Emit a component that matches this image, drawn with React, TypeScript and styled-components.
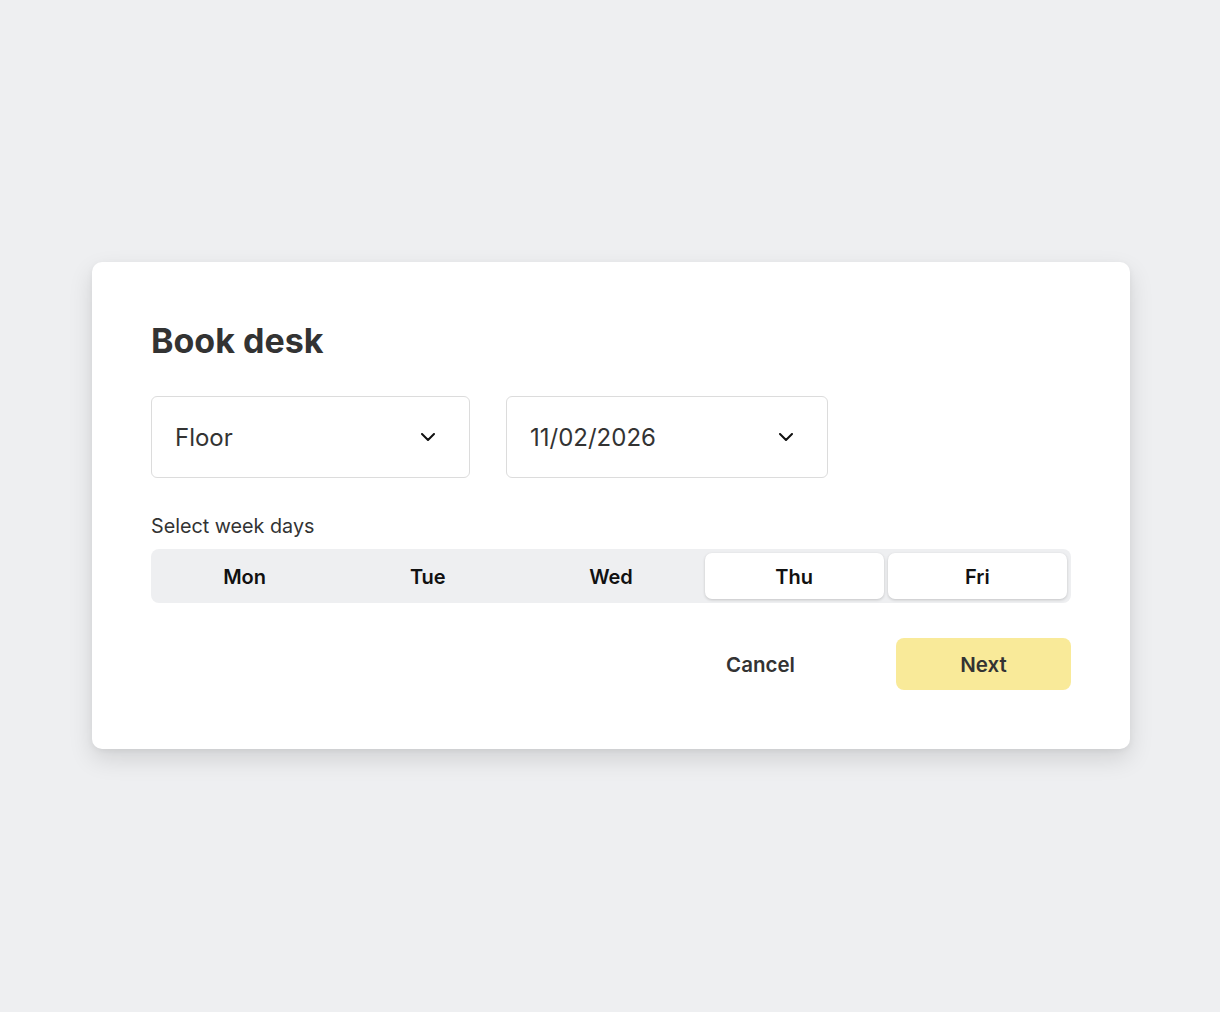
import React, { useState } from 'react';
import styled, { createGlobalStyle } from 'styled-components';

const GlobalStyle = createGlobalStyle`
  * {
    box-sizing: border-box;
  }

  body {
    margin: 0;
    background: #eeeff1;
    font-family: Inter, 'Noto Sans', sans-serif;
    color: #333333;
  }
`;

const Page = styled.div`
  min-height: 100vh;
  display: flex;
  align-items: center;
  justify-content: center;
  padding: 0 0 1px 2px;
`;

const Card = styled.div`
  width: 1038px;
  background: #ffffff;
  border-radius: 10px;
  padding: 60px 59px 59px;
  box-shadow: 0 10px 24px rgba(0, 0, 0, 0.12), 0 2px 6px rgba(0, 0, 0, 0.05);
`;

const Title = styled.h1`
  margin: 0;
  font-size: 34px;
  line-height: 37px;
  font-weight: 700;
  color: #333333;
`;

const Fields = styled.div`
  display: flex;
  gap: 36px;
  margin-top: 37px;
`;

const Select = styled.button<{ $width: number }>`
  width: ${({ $width }) => $width}px;
  height: 82px;
  display: flex;
  align-items: center;
  justify-content: space-between;
  padding: 0 34px 0 23px;
  background: #ffffff;
  border: 1px solid #dcdcdc;
  border-radius: 6px;
  font-family: inherit;
  font-size: 24px;
  color: #333333;
  cursor: pointer;
`;

const Label = styled.div`
  margin-top: 36px;
  font-size: 19.75px;
  line-height: 24px;
  color: #333333;
`;

const Segments = styled.div`
  margin-top: 11px;
  display: grid;
  grid-template-columns: repeat(5, 1fr);
  gap: 4px;
  padding: 4px;
  height: 54px;
  background: #eeeff1;
  border-radius: 8px;
`;

const Segment = styled.button<{ $active: boolean }>`
  border: none;
  border-radius: 7px;
  padding: 2px 0 0;
  background: ${({ $active }) => ($active ? '#ffffff' : 'transparent')};
  box-shadow: ${({ $active }) =>
    $active ? '0 1px 3px rgba(0, 0, 0, 0.18)' : 'none'};
  font-family: inherit;
  font-size: 20px;
  font-weight: 600;
  color: #111111;
  cursor: pointer;
`;

const Actions = styled.div`
  margin-top: 35px;
  display: flex;
  justify-content: flex-end;
  gap: 48px;
`;

const ActionButton = styled.button<{ $primary?: boolean }>`
  width: 175px;
  height: 52px;
  border: none;
  border-radius: 8px;
  background: ${({ $primary }) => ($primary ? '#f9ea99' : 'transparent')};
  font-family: inherit;
  font-size: 20.5px;
  font-weight: 600;
  color: #333333;
  cursor: pointer;
`;

const Chevron = () => (
  <svg width="14" height="8" viewBox="0 0 14 8" fill="none">
    <path
      d="M1 1L7 7L13 1"
      stroke="#111111"
      strokeWidth="2"
      strokeLinecap="round"
      strokeLinejoin="round"
    />
  </svg>
);

const days = ['Mon', 'Tue', 'Wed', 'Thu', 'Fri'];

const App = () => {
  const [selected, setSelected] = useState<string[]>(['Thu', 'Fri']);

  const toggle = (day: string) =>
    setSelected((prev) =>
      prev.includes(day) ? prev.filter((d) => d !== day) : [...prev, day]
    );

  return (
    <Page>
      <GlobalStyle />
      <Card>
        <Title>Book desk</Title>
        <Fields>
          <Select $width={319}>
            Floor
            <Chevron />
          </Select>
          <Select $width={322}>
            11/02/2026
            <Chevron />
          </Select>
        </Fields>
        <Label>Select week days</Label>
        <Segments>
          {days.map((day) => (
            <Segment
              key={day}
              $active={selected.includes(day)}
              onClick={() => toggle(day)}
            >
              {day}
            </Segment>
          ))}
        </Segments>
        <Actions>
          <ActionButton>Cancel</ActionButton>
          <ActionButton $primary>Next</ActionButton>
        </Actions>
      </Card>
    </Page>
  );
};

export default App;
